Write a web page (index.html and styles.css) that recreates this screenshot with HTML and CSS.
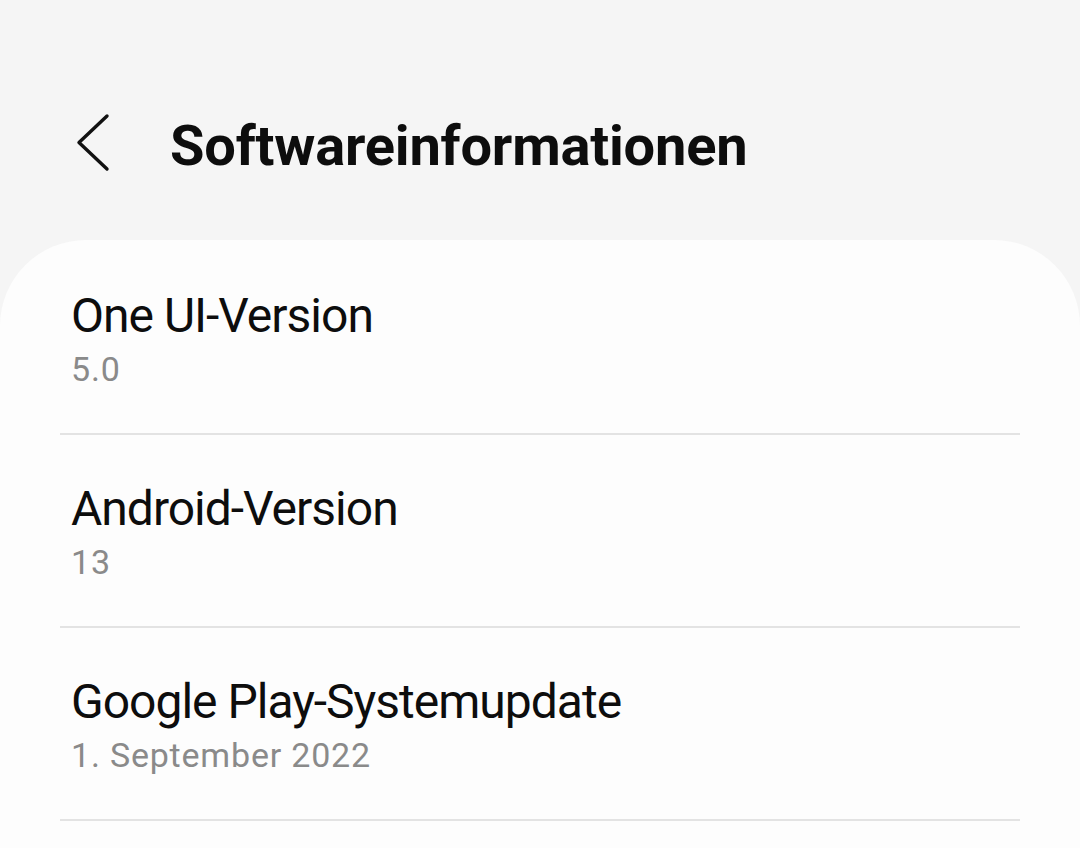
FILE: index.html
```html
<!DOCTYPE html>
<html lang="de">
<head>
  <meta charset="UTF-8" />
  <meta name="viewport" content="width=device-width, initial-scale=1.0" />
  <title>Softwareinformationen</title>
  <link rel="stylesheet" href="styles.css">
</head>
<body>

  <header class="barra">
    <button class="atras" aria-label="Zurück">
      <svg width="40" height="60" viewBox="0 0 40 60">
        <path d="M33 3 L5 29.5 L33 56" fill="none" stroke="#111" stroke-width="3.4" stroke-linecap="round" stroke-linejoin="round"/>
      </svg>
    </button>
    <h1>Softwareinformationen</h1>
  </header>

  <section class="tarjeta">
    <div class="fila">
      <p class="titulo">One UI-Version</p>
      <p class="valor">5.0</p>
    </div>
    <div class="fila">
      <p class="titulo">Android-Version</p>
      <p class="valor">13</p>
    </div>
    <div class="fila">
      <p class="titulo">Google Play-Systemupdate</p>
      <p class="valor">1. September 2022</p>
    </div>
  </section>

</body>
</html>
```

FILE: styles.css
```css
body {
  margin: 0;
  background-color: #f5f5f5;
  font-family: Roboto, "Noto Sans", sans-serif;
  color: #0d0d0d;
}

.barra {
  height: 240px;
  display: flex;
  align-items: center;
  padding: 52px 0 0 74px;
  box-sizing: border-box;
}
.atras {
  background: none;
  border: none;
  padding: 0;
  width: 40px;
  height: 60px;
  margin-top: -6px;
  cursor: pointer;
}
.atras svg {
  display: block;
}
.barra h1 {
  margin: 0 0 0 56px;
  font-size: 56px;
  font-weight: 700;
  line-height: 64px;
  letter-spacing: -0.2px;
}

.tarjeta {
  background: #fdfdfd;
  border-radius: 86px 86px 0 0;
  padding: 2px 60px 0;
  height: 606px;
}
.fila {
  padding: 46px 0 42px 11px;
  border-bottom: 2px solid #e3e3e3;
}
.fila p {
  margin: 0;
}
.titulo {
  font-size: 48px;
  line-height: 56px;
  letter-spacing: -1px;
}
.valor {
  margin-top: 3px !important;
  font-size: 34px;
  line-height: 44px;
  letter-spacing: 0.8px;
  color: #8a8a8a;
}
```
